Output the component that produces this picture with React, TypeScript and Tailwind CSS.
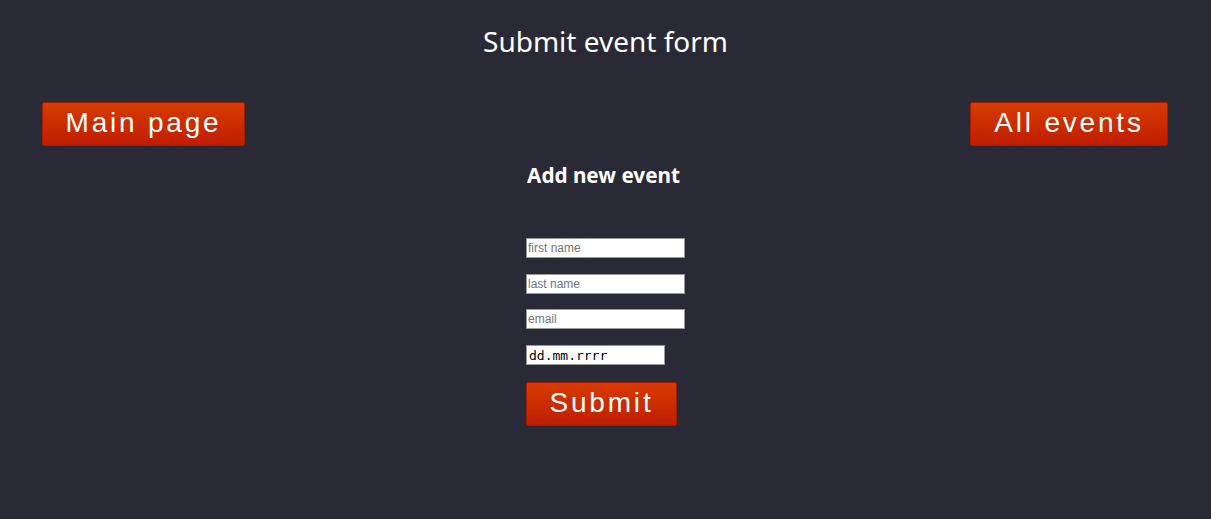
import React from "react";

const btn =
  "inline-block border border-[#a61c00] rounded-[2px] bg-gradient-to-b from-[#d63a00] to-[#c01c00] text-white text-[28px] leading-[32px] tracking-[0.1em] pt-[4px] pb-[6px] text-center font-['Liberation_Sans',Arial,sans-serif]";

const field =
  "h-[20px] w-[159px] border border-[#9a9a9a] bg-white px-[1px] text-[12px] text-black placeholder:text-[#757575] font-['Liberation_Sans',Arial,sans-serif] outline-none";

export default function App() {
  return (
    <div className="min-h-[519px] w-full bg-[#2a2a36] text-white font-['Noto_Sans',sans-serif]">
      <h1 className="pt-[21px] text-center text-[28px] leading-[40px] font-normal">
        Submit event form
      </h1>
      <div className="mt-[41px] flex justify-between pl-[42px] pr-[43px]">
        <button className={btn + " w-[203px]"}>Main page</button>
        <button className={btn + " w-[198px]"}>All events</button>
      </div>
      <div className="flex flex-col items-center">
        <h3 className="mt-[15px] pr-[4px] text-[20.7px] leading-[28px] font-bold">Add new event</h3>
        <div className="mt-[49px] flex w-[159px] flex-col items-start">
          <input placeholder="first name" className={field} />
          <input placeholder="last name" className={field + " mt-[16px]"} />
          <input placeholder="email" className={field + " mt-[15px]"} />
          <input
            readOnly
            value="dd.mm.rrrr"
            className="mt-[16px] h-[20px] w-[139px] border border-[#9a9a9a] bg-white px-[2px] text-[13px] text-black font-['DejaVu_Sans_Mono',monospace] outline-none"
          />
          <button className={btn + " mt-[17px] w-[151px]"}>Submit</button>
        </div>
      </div>
    </div>
  );
}
